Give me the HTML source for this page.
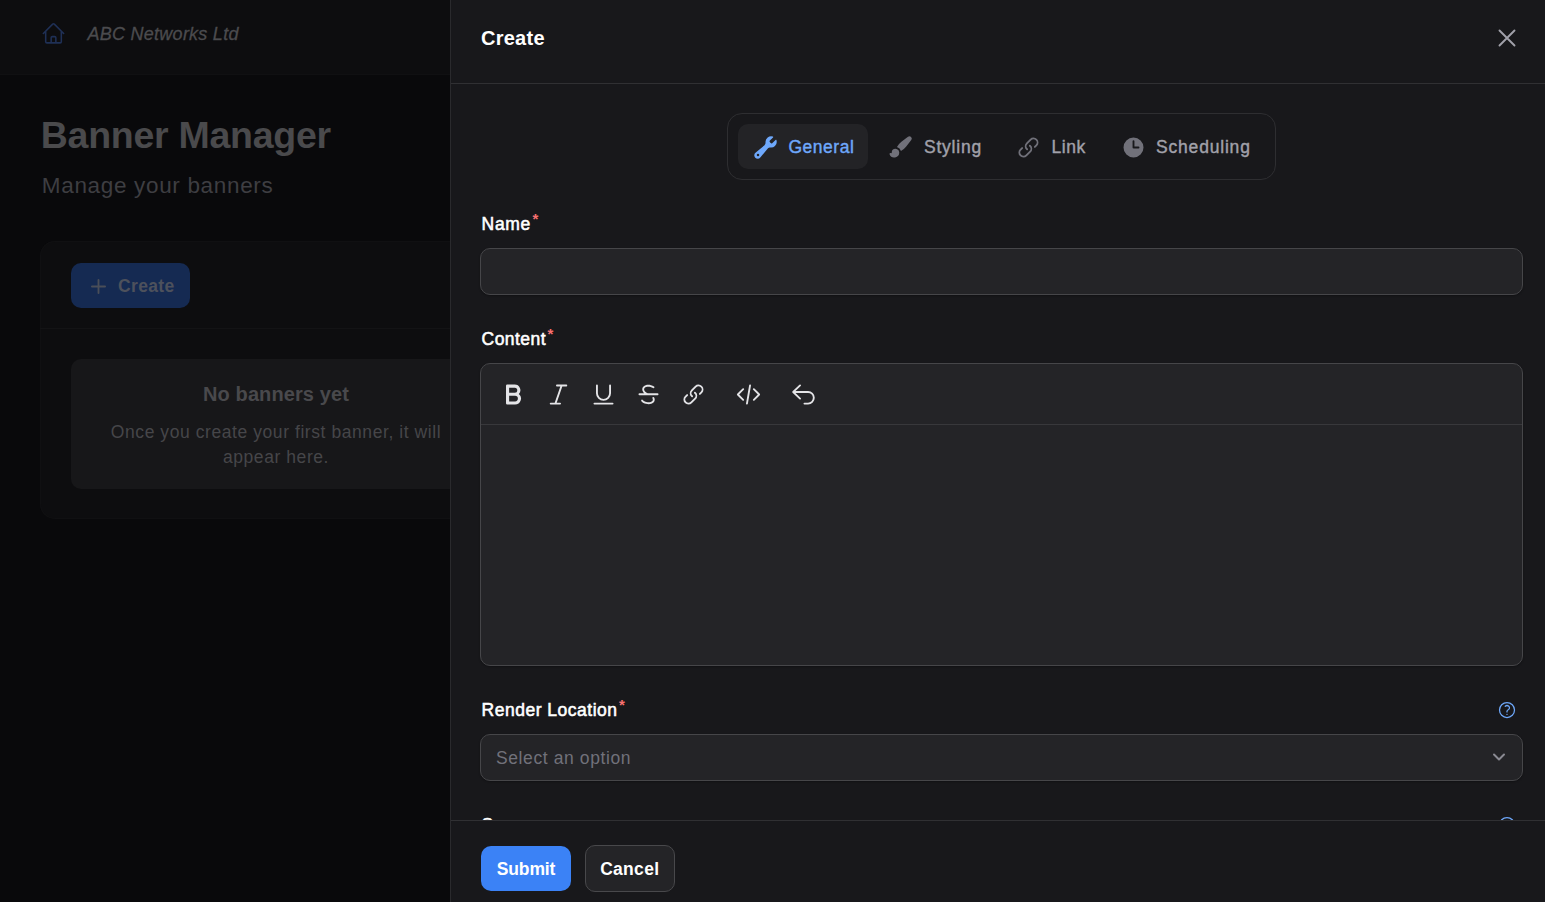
<!DOCTYPE html>
<html lang="en">
<head>
<meta charset="utf-8">
<title>Banner Manager</title>
<style>
*{box-sizing:border-box;margin:0;padding:0}
html,body{width:1545px;height:902px;overflow:hidden;background:#09090b}
body{font-family:"Liberation Sans",sans-serif;color:#fff;position:relative}
.abs{position:absolute}
svg{display:block;overflow:visible}
/* ---------- dimmed page behind ---------- */
.page{position:absolute;left:0;top:0;width:451px;height:902px;overflow:hidden;background:#09090b}
.topbar{position:absolute;left:0;top:0;width:1545px;height:75px;background:#0d0d0f;border-bottom:1px solid #101012}
.brand{position:absolute;left:87.6px;top:22px;font-size:18px;line-height:24px;font-style:italic;color:#4b4b4e;-webkit-text-stroke:0.3px #4b4b4e;white-space:nowrap;letter-spacing:0.25px}
.h1{position:absolute;left:40.8px;top:113px;font-size:37.5px;line-height:45px;font-weight:700;color:#4a4a4c;white-space:nowrap;letter-spacing:-0.27px}
.sub{position:absolute;left:41.8px;top:172px;font-size:22.5px;line-height:28px;color:#3e3e42;white-space:nowrap;letter-spacing:0.67px}
.card{position:absolute;left:40px;top:241px;width:480px;height:278px;border-radius:15px;background:#0d0d0f;box-shadow:inset 0 0 0 1px #101012}
.card .hr{position:absolute;left:0;top:87px;width:100%;height:1px;background:#131315}
.btn-create{position:absolute;left:31px;top:22px;width:119px;height:45px;border-radius:10px;background:#152a52;color:#4d515c;font-size:17.5px;font-weight:700;line-height:45px;white-space:nowrap}
.btn-create span{position:absolute;left:47px;top:1px;letter-spacing:0.35px}
.empty{position:absolute;left:31px;top:118px;width:410px;height:130px;border-radius:10px;background:#171719;text-align:center}
.empty .t{position:absolute;left:0;width:100%;top:21px;font-size:20px;line-height:28px;font-weight:700;color:#49494c;letter-spacing:0.1px}
.empty .d{position:absolute;left:0;width:100%;top:61px;font-size:17.5px;line-height:25px;color:#464649;letter-spacing:0.57px}
/* ---------- slide-over ---------- */
.panel{position:absolute;left:450px;top:0;width:1095px;height:902px;background:#18181b;border-left:1px solid #2a2a2d}
.panel .head{position:absolute;left:0;top:0;width:100%;height:84px;border-bottom:1px solid #303033}
.panel .head h2{position:absolute;left:30px;top:24px;font-size:20px;line-height:28px;font-weight:700;color:#fff;letter-spacing:0.25px}
.tabs{position:absolute;left:276px;top:113px;width:549px;height:67px;border:1px solid #2e2e31;border-radius:15px}
.tab{position:absolute;top:10px;height:45px;border-radius:10px;font-size:17.5px;line-height:46px;font-weight:400;-webkit-text-stroke:0.4px currentColor;color:#a1a1aa;white-space:nowrap}
.tab.on{background:#232326;color:#6ea8fb}
.tab span{position:absolute;top:0}
.lbl{position:absolute;left:30.6px;font-size:17.5px;line-height:25px;font-weight:400;-webkit-text-stroke:0.55px #fff;color:#fff;white-space:nowrap;letter-spacing:-0.1px}
.lbl sup{-webkit-text-stroke:0;color:#f87171;font-size:15px;font-weight:700;position:relative;top:1px;vertical-align:top;line-height:12px;margin-left:1.5px;letter-spacing:0}
.inp{position:absolute;left:29px;width:1043px;border:1px solid #464649;border-radius:10px;background:#242427;box-shadow:0 1px 2px rgba(0,0,0,.3)}
.tool{position:absolute;left:0;top:0;width:100%;height:61px;border-bottom:1px solid #38383b}
.ti{position:absolute;top:18px;width:25px;height:25px;fill:#e4e4e7}
.ph{position:absolute;left:15px;top:11px;font-size:17.5px;line-height:25px;color:#71717a;letter-spacing:0.6px}
.foot{position:absolute;left:0;top:820px;width:100%;height:82px;border-top:1px solid #303033;background:#18181b}
.b{position:absolute;top:25px;height:45px;width:90px;border-radius:10px;font-size:17.5px;font-weight:700;line-height:46px;text-align:center;color:#fff;letter-spacing:-0.1px}
.b.pri{left:30px;background:#3b82f6}
.b.sec{left:134px;top:24px;height:47px;background:#242427;border:1px solid #48484b;line-height:46px;letter-spacing:0.3px;text-indent:-0.5px}
</style>
</head>
<body>
<!-- dimmed admin page -->
<div class="page">
  <div class="topbar"></div>
  <svg class="abs" style="left:41px;top:21px" width="25" height="25" viewBox="0 0 24 24" fill="none" stroke="#1f3056" stroke-width="1.5" stroke-linecap="round" stroke-linejoin="round"><path d="m2.25 12 8.954-8.955c.44-.439 1.152-.439 1.591 0L21.75 12M4.5 9.75v10.125c0 .621.504 1.125 1.125 1.125H9.75v-4.875c0-.621.504-1.125 1.125-1.125h2.25c.621 0 1.125.504 1.125 1.125V21h4.125c.621 0 1.125-.504 1.125-1.125V9.75M8.25 21h8.25"/></svg>
  <div class="brand">ABC Networks Ltd</div>
  <div class="h1">Banner Manager</div>
  <div class="sub">Manage your banners</div>
  <div class="card">
    <div class="btn-create">
      <svg class="abs" style="left:15px;top:10.5px" width="25" height="25" viewBox="0 0 20 20" fill="#4a4e58"><path d="M10.75 4.75a.75.75 0 0 0-1.5 0v4.5h-4.5a.75.75 0 0 0 0 1.5h4.5v4.5a.75.75 0 0 0 1.5 0v-4.5h4.5a.75.75 0 0 0 0-1.5h-4.5v-4.5Z"/></svg>
      <span>Create</span>
    </div>
    <div class="hr"></div>
    <div class="empty">
      <div class="t">No banners yet</div>
      <div class="d">Once you create your first banner, it will<br>appear here.</div>
    </div>
  </div>
</div>

<!-- slide-over -->
<div class="panel">
  <div class="head">
    <h2>Create</h2>
    <svg class="abs" style="left:1041px;top:23px" width="30" height="30" viewBox="0 0 24 24" fill="none" stroke="#a1a1aa" stroke-width="1.5" stroke-linecap="round"><path d="M6 18 18 6M6 6l12 12"/></svg>
  </div>

  <div class="tabs">
    <div class="tab on" style="left:10px;width:130px">
      <svg class="abs" style="left:14.7px;top:11px" width="25" height="25" viewBox="0 0 20 20" fill="#6ea8fb"><path fill-rule="evenodd" d="M19 5.5a4.5 4.5 0 0 1-4.791 4.49c-.873-.055-1.808.128-2.368.8l-6.024 7.23a2.724 2.724 0 1 1-3.837-3.837L9.21 8.16c.672-.56.855-1.495.8-2.368a4.5 4.5 0 0 1 5.873-4.575c.324.105.39.51.15.752L13.34 4.66a.455.455 0 0 0-.11.494 3.01 3.01 0 0 0 1.617 1.617c.17.07.363.02.493-.111l2.692-2.692c.241-.241.647-.174.752.15.14.435.216.9.216 1.382ZM4 17a1 1 0 1 0 0-2 1 1 0 0 0 0 2Z" clip-rule="evenodd"/></svg>
      <span style="left:50.4px;letter-spacing:0.53px">General</span>
    </div>
    <div class="tab" style="left:147px;width:122px">
      <svg class="abs" style="left:13.2px;top:11px" width="25" height="25" viewBox="0 0 20 20" fill="#71717a"><path d="M15.993 1.385a1.87 1.87 0 0 1 2.623 2.622l-4.03 5.27a12.749 12.749 0 0 1-4.237 3.562 4.508 4.508 0 0 0-3.188-3.188 12.75 12.75 0 0 1 3.562-4.236l5.27-4.03ZM6 11a3 3 0 0 0-3 3 .5.5 0 0 1-.72.45.75.75 0 0 0-1.035.931A4.001 4.001 0 0 0 9 14.004V14a3.01 3.01 0 0 0-1.66-2.685A2.99 2.99 0 0 0 6 11Z"/></svg>
      <span style="left:49px;letter-spacing:0.78px">Styling</span>
    </div>
    <div class="tab" style="left:276px;width:98px">
      <svg class="abs" style="left:11.8px;top:11px" width="25" height="25" viewBox="0 0 20 20" fill="#71717a"><path d="M12.232 4.232a2.5 2.5 0 0 1 3.536 3.536l-1.225 1.224a.75.75 0 0 0 1.061 1.06l1.224-1.224a4 4 0 0 0-5.656-5.656l-3 3a4 4 0 0 0 .225 5.865.75.75 0 0 0 .977-1.138 2.5 2.5 0 0 1-.142-3.667l3-3Z"/><path d="M11.603 7.963a.75.75 0 0 0-.977 1.138 2.5 2.5 0 0 1 .142 3.667l-3 3a2.5 2.5 0 0 1-3.536-3.536l1.225-1.224a.75.75 0 0 0-1.061-1.06l-1.224 1.224a4 4 0 1 0 5.656 5.656l3-3a4 4 0 0 0-.225-5.865Z"/></svg>
      <span style="left:47.4px;letter-spacing:0.57px">Link</span>
    </div>
    <div class="tab" style="left:381px;width:158px">
      <svg class="abs" style="left:12px;top:11px" width="25" height="25" viewBox="0 0 20 20" fill="#71717a"><path fill-rule="evenodd" d="M10 18a8 8 0 1 0 0-16 8 8 0 0 0 0 16Zm.75-13a.75.75 0 0 0-1.5 0v5c0 .414.336.75.75.75h4a.75.75 0 0 0 0-1.500h-3.250V5Z" clip-rule="evenodd"/></svg>
      <span style="left:47px;letter-spacing:0.81px">Scheduling</span>
    </div>
  </div>

  <div class="lbl" style="top:212px;letter-spacing:0.67px">Name<sup>*</sup></div>
  <div class="inp" style="top:248px;height:47px"></div>

  <div class="lbl" style="top:327px;letter-spacing:0.45px">Content<sup>*</sup></div>
  <div class="inp" style="top:363px;height:303px">
    <div class="tool">
      <svg class="ti" style="left:20px" viewBox="0 0 20 20"><path fill-rule="evenodd" clip-rule="evenodd" d="M4 3a1 1 0 0 1 1-1h6a4.500 4.500 0 0 1 3.274 7.587A4.750 4.750 0 0 1 11.250 18H5a1 1 0 0 1-1-1V3Zm2.500 5.500v-4H11a2 2 0 1 1 0 4H6.500Zm0 2.500v4.500h4.750a2.250 2.250 0 0 0 0-4.500H6.500Z"/></svg>
      <svg class="ti" style="left:65px" viewBox="0 0 20 20"><path fill-rule="evenodd" clip-rule="evenodd" d="M8 2.750A.750.750 0 0 1 8.750 2h7.500a.750.750 0 0 1 0 1.500h-3.215l-4.483 13h2.698a.750.750 0 0 1 0 1.500h-7.500a.750.750 0 0 1 0-1.500h3.215l4.483-13H8.750A.750.750 0 0 1 8 2.750Z"/></svg>
      <svg class="ti" style="left:110px" viewBox="0 0 20 20"><path fill-rule="evenodd" clip-rule="evenodd" d="M4.750 2a.750.750 0 0 1 .750.750V9a4.500 4.500 0 1 0 9 0V2.750a.750.750 0 0 1 1.500 0V9A6 6 0 0 1 4 9V2.750A.750.750 0 0 1 4.750 2ZM2 17.250a.750.750 0 0 1 .750-.750h14.500a.750.750 0 0 1 0 1.500H2.750a.750.750 0 0 1-.750-.750Z"/></svg>
      <svg class="ti" style="left:155px" viewBox="0 0 20 20"><path fill-rule="evenodd" clip-rule="evenodd" d="M11.617 3.963c-1.186-.318-2.418-.323-3.416.015-.992.336-1.490.910-1.642 1.476-.152.566-.007 1.313.684 2.100.528.600 1.273 1.100 2.128 1.446h7.879a.750.750 0 0 1 0 1.500H2.750a.750.750 0 0 1 0-1.500h3.813a5.976 5.976 0 0 1-.447-.456C5.180 7.479 4.798 6.231 5.110 5.066c.312-1.164 1.268-2.055 2.610-2.509 1.336-.451 2.877-.420 4.286-.043.856.230 1.684.592 2.409 1.074a.750.750 0 1 1-.830 1.250 6.723 6.723 0 0 0-1.968-.875Zm1.909 8.123a.750.750 0 0 1 1.015.309c.530.990.607 2.062.180 3.010-.421.940-1.289 1.648-2.441 2.038-1.336.452-2.877.420-4.286.043-1.409-.377-2.759-1.121-3.690-2.180a.750.750 0 1 1 1.127-.990c.696.791 1.765 1.403 2.952 1.721 1.186.318 2.418.323 3.416-.015.853-.288 1.340-.756 1.555-1.232.210-.467.205-1.049-.136-1.690a.750.750 0 0 1 .308-1.014Z"/></svg>
      <svg class="ti" style="left:200px" viewBox="0 0 20 20"><path d="M12.232 4.232a2.500 2.500 0 0 1 3.536 3.536l-1.225 1.224a.750.750 0 0 0 1.061 1.060l1.224-1.224a4 4 0 0 0-5.656-5.656l-3 3a4 4 0 0 0 .225 5.865.750.750 0 0 0 .977-1.138 2.500 2.500 0 0 1-.142-3.667l3-3Z"/><path d="M11.603 7.963a.750.750 0 0 0-.977 1.138 2.500 2.500 0 0 1 .142 3.667l-3 3a2.500 2.500 0 0 1-3.536-3.536l1.225-1.224a.750.750 0 0 0-1.061-1.060l-1.224 1.224a4 4 0 1 0 5.656 5.656l3-3a4 4 0 0 0-.225-5.865Z"/></svg>
      <svg class="ti" style="left:255px" viewBox="0 0 20 20"><path fill-rule="evenodd" clip-rule="evenodd" d="M6.280 5.220a.750.750 0 0 1 0 1.060L2.560 10l3.720 3.720a.750.750 0 0 1-1.060 1.060L.970 10.530a.750.750 0 0 1 0-1.060l4.250-4.250a.750.750 0 0 1 1.060 0Zm7.440 0a.750.750 0 0 1 1.060 0l4.250 4.250a.750.750 0 0 1 0 1.060l-4.250 4.250a.750.750 0 0 1-1.060-1.060L17.440 10l-3.720-3.720a.750.750 0 0 1 0-1.060ZM11.377 2.011a.750.750 0 0 1 .612.867l-2.500 14.500a.750.750 0 0 1-1.478-.255l2.500-14.500a.750.750 0 0 1 .866-.612Z"/></svg>
      <svg class="ti" style="left:310px" viewBox="0 0 20 20"><path fill-rule="evenodd" clip-rule="evenodd" d="M7.793 2.232a.750.750 0 0 1-.025 1.060L3.622 7.250h10.003a5.375 5.375 0 0 1 0 10.750H10.750a.750.750 0 0 1 0-1.500h2.875a3.875 3.875 0 0 0 0-7.750H3.622l4.146 3.957a.750.750 0 0 1-1.036 1.085l-5.500-5.250a.750.750 0 0 1 0-1.085l5.500-5.250a.750.750 0 0 1 1.060.025Z"/></svg>
    </div>
  </div>

  <div class="lbl" style="top:698px;letter-spacing:0.5px">Render Location<sup>*</sup></div>
  <svg class="abs" style="left:1046px;top:700.2px" width="20" height="20" viewBox="0 0 24 24" fill="none" stroke="#6ea8fb" stroke-width="1.5" stroke-linecap="round" stroke-linejoin="round"><path d="M9.879 7.519c1.171-1.025 3.071-1.025 4.242 0 1.172 1.025 1.172 2.687 0 3.712-.203.179-.43.326-.67.442-.745.361-1.450.999-1.450 1.827v.750M21 12a9 9 0 1 1-18 0 9 9 0 0 1 18 0Zm-9 5.250h.008v.008H12v-.008Z"/></svg>
  <div class="inp" style="top:734px;height:47px">
    <div class="ph">Select an option</div>
    <svg class="abs" style="left:1008px;top:12.2px" width="20" height="20" viewBox="0 0 20 20" fill="none" stroke="#8a8a92" stroke-width="2" stroke-linecap="round" stroke-linejoin="round"><path d="M5 7.500 10 12.500 15 7.500"/></svg>
  </div>

  <div class="lbl" style="top:812.6px;letter-spacing:0.5px">Scope</div>
  <svg class="abs" style="left:1046px;top:814.8px" width="20" height="20" viewBox="0 0 24 24" fill="none" stroke="#6ea8fb" stroke-width="1.5"><circle cx="12" cy="12" r="9"/></svg>

  <div class="foot">
    <div class="b pri">Submit</div>
    <div class="b sec">Cancel</div>
  </div>
</div>
</body>
</html>
